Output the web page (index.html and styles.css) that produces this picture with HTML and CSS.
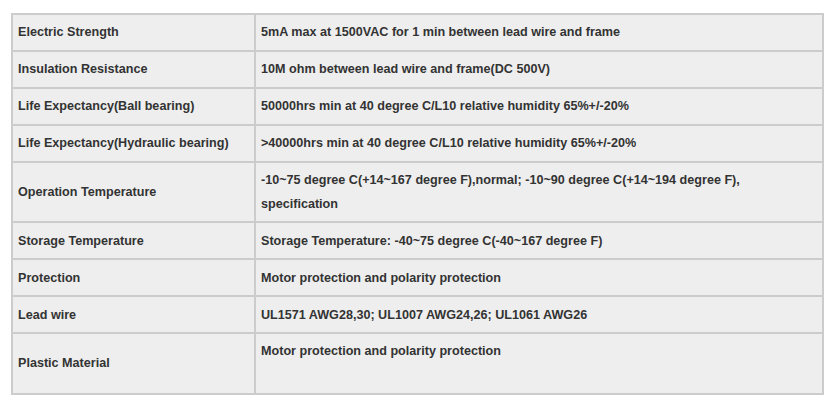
FILE: index.html
```html
<!DOCTYPE html>
<html>
<head>
<meta charset="utf-8">
<link rel="stylesheet" href="styles.css">
</head>
<body>
<table class="spec">
  <tr><td class="label">Electric Strength</td><td class="value">5mA max at 1500VAC for 1 min between lead wire and frame</td></tr>
  <tr><td class="label">Insulation Resistance</td><td class="value">10M ohm between lead wire and frame(DC 500V)</td></tr>
  <tr><td class="label">Life Expectancy(Ball bearing)</td><td class="value">50000hrs min at 40 degree C/L10 relative humidity 65%+/-20%</td></tr>
  <tr><td class="label">Life Expectancy(Hydraulic bearing)</td><td class="value">&gt;40000hrs min at 40 degree C/L10 relative humidity 65%+/-20%</td></tr>
  <tr><td class="label">Operation Temperature</td><td class="value">-10~75 degree C(+14~167 degree F),normal; -10~90 degree C(+14~194 degree F),<br>specification</td></tr>
  <tr><td class="label">Storage Temperature</td><td class="value">Storage Temperature: -40~75 degree C(-40~167 degree F)</td></tr>
  <tr><td class="label">Protection</td><td class="value">Motor protection and polarity protection</td></tr>
  <tr><td class="label">Lead wire</td><td class="value">UL1571 AWG28,30; UL1007 AWG24,26; UL1061 AWG26</td></tr>
  <tr><td class="label">Plastic Material</td><td class="value">Motor protection and polarity protection<br>&nbsp;</td></tr>
</table>
</body>
</html>
```
FILE: styles.css
```css
html, body {
  margin: 0;
  padding: 0;
  background: #ffffff;
}
body {
  padding: 13px 10px 0 11px;
  font-family: "Liberation Sans", Arial, sans-serif;
}
.spec {
  width: 813px;
  border-collapse: collapse;
  background: #eeeeee;
  color: #333333;
  font-size: 12.6px;
  font-weight: bold;
  line-height: 24px;
}
.spec td {
  border: 2px solid #cccccc;
  padding: 5.45px 5px;
  vertical-align: middle;
  text-align: left;
}
.spec .label {
  width: 231px;
}
```
